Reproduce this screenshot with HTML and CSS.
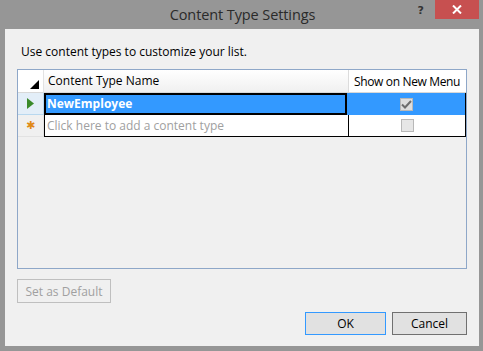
FILE: index.html
```html
<!DOCTYPE html>
<html lang="en">
<head>
  <meta charset="UTF-8">
  <title>Content Type Settings</title>
  <link rel="stylesheet" href="styles.css">
</head>
<body>
  <div class="window">
    <!-- Title bar -->
    <div class="titlebar">
      <div></div>
      <div class="title">Content Type Settings</div>
      <div class="controls">
        <span class="help">?</span>
        <span class="close">
          <svg width="10" height="9" viewBox="0 0 10 9">
            <path d="M1 0.5 L9 8.5 M9 0.5 L1 8.5" stroke="#fff" stroke-width="2"/>
          </svg>
        </span>
      </div>
    </div>

    <!-- Dialog body -->
    <div class="content">
      <p class="intro">Use content types to customize your list.</p>

      <div class="grid">
        <div class="row head">
          <div class="rh corner">
            <svg width="10" height="10" viewBox="0 0 10 10"><path d="M9 0 L9 9 L0 9 Z" fill="#000"/></svg>
          </div>
          <div class="cell name">Content Type Name</div>
          <div class="cell check">Show on New Menu</div>
        </div>
        <div class="row selected">
          <div class="rh">
            <svg width="7" height="11" viewBox="0 0 7 11"><path d="M0 0 L7 5.5 L0 11 Z" fill="#3a8a2a"/></svg>
          </div>
          <div class="cell name focus">NewEmployee</div>
          <div class="cell check"><span class="box checked">
            <svg width="11" height="9" viewBox="0 0 11 9"><path d="M1 4.5 L4 7.5 L10 1" stroke="#6e6e6e" stroke-width="2" fill="none"/></svg>
          </span></div>
        </div>
        <div class="row new">
          <div class="rh"><span class="star">&#x2731;</span></div>
          <div class="cell name placeholder">Click here to add a content type</div>
          <div class="cell check"><span class="box"></span></div>
        </div>
      </div>

      <div class="left-buttons">
        <button class="btn disabled">Set as Default</button>
      </div>

      <div class="footer">
        <button class="btn ok">OK</button>
        <button class="btn cancel">Cancel</button>
      </div>
    </div>
  </div>
</body>
</html>
```

FILE: styles.css
```css
body {
  margin: 0;
  font-family: "Open Sans", "Noto Sans", sans-serif;
  background: #969696;
}

.window {
  width: 483px;
  height: 351px;
  display: flex;
  flex-direction: column;
  background: #969696;
}

.titlebar {
  height: 29px;
  display: grid;
  grid-template-columns: 1fr auto 1fr;
  align-items: start;
}

.title {
  font-size: 14.5px;
  color: #2a2a2a;
  line-height: 29px;
  padding-left: 2px;
  letter-spacing: -0.1px;
}

.controls {
  display: flex;
  justify-content: flex-end;
  align-items: flex-start;
  padding-right: 4px;
}

.help {
  font-family: "DejaVu Sans", sans-serif;
  font-weight: bold;
  font-size: 11px;
  color: #333;
  margin-top: 4px;
  margin-right: 11px;
}

.close {
  width: 44px;
  height: 19px;
  background: #c75050;
  display: flex;
  align-items: center;
  justify-content: center;
}

.content {
  flex: 1;
  margin: 0 4px 5px 5px;
  background: #f0f0f0;
  display: flex;
  flex-direction: column;
  padding: 0 12px 0 12px;
  font-size: 12px;
}

.intro {
  margin: 16px 0 0 4px;
  color: #000;
  line-height: 14px;
  height: 24px;
}

/* Data grid */
.grid {
  height: 198px;
  width: 448px;
  border: 1px solid #8ea7c8;
  background: #f0f0f0;
}

.row {
  display: flex;
  height: 22px;
}

.row.head {
  height: 23px;
}

.rh {
  width: 25px;
  flex: none;
  background: #f0f0f0;
  border-right: 1px solid #e2e2e2;
  display: flex;
  align-items: center;
  justify-content: center;
}

.head .rh {
  background: #fff;
  align-items: flex-end;
  justify-content: flex-end;
  padding: 0 3px 2px 0;
  width: 22px;
  border-bottom: 1px solid #d8d8d8;
}

.selected .rh {
  background: #e3eef8;
  border-bottom: 1px solid #b8d8ef;
  border-right: 1px solid #b8d8ef;
}

.new .rh {
  border-bottom: 1px solid #e2e2e2;
}

.star {
  color: #e08a16;
  font-size: 11px;
  font-family: "DejaVu Sans", sans-serif;
}

.cell {
  line-height: 21px;
  white-space: nowrap;
  overflow: hidden;
}

.cell.name {
  width: 300px;
  padding-left: 4px;
  flex: none;
}

.cell.check {
  flex: 1;
  display: flex;
  justify-content: center;
  align-items: center;
}

.head .cell {
  background: linear-gradient(#ffffff, #f0f0f0);
  border-bottom: 1px solid #d8d8d8;
  color: #000;
}

.head .cell.check {
  background: #fff;
  border-left: 1px solid #dcdcdc;
  justify-content: flex-start;
  padding-left: 5px;
  letter-spacing: -0.35px;
}

.selected .cell {
  background: #3399ff;
  color: #fff;
  font-weight: bold;
}

.selected .cell.focus {
  border: 2px solid #000;
  width: 298px;
  padding-left: 1px;
  line-height: 18px;
}

.selected .cell.check {
  border-right: 1px solid #000;
}

.new .cell {
  background: #fff;
  border-bottom: 1px solid #000;
  border-right: 1px solid #000;
}

.new .cell.name {
  border-left: 1px solid #000;
  width: 301px;
  padding-left: 2px;
}

.placeholder {
  color: #a0a0a0;
}

.box {
  width: 11px;
  height: 11px;
  border: 1px solid #b8b8b8;
  background: #e6e6e6;
  display: flex;
  align-items: center;
  justify-content: center;
}

.box.checked {
  background: #dedede;
}

/* Buttons */
.left-buttons {
  margin-top: 10px;
}

.btn {
  font-family: inherit;
  font-size: 12px;
  height: 24px;
  background: #e1e1e1;
  border: 1px solid #adadad;
  padding: 0;
  color: #000;
}

.btn.disabled {
  width: 94px;
  background: #f0f0f0;
  color: #a0a0a0;
  border-color: #bfbfbf;
}

.footer {
  margin-top: 9px;
  display: flex;
  justify-content: flex-end;
  gap: 6px;
}

.btn.ok {
  width: 81px;
  height: 23px;
  border-color: #3399ff;
}

.btn.cancel {
  width: 75px;
  height: 23px;
  border-color: #707070;
}
```
